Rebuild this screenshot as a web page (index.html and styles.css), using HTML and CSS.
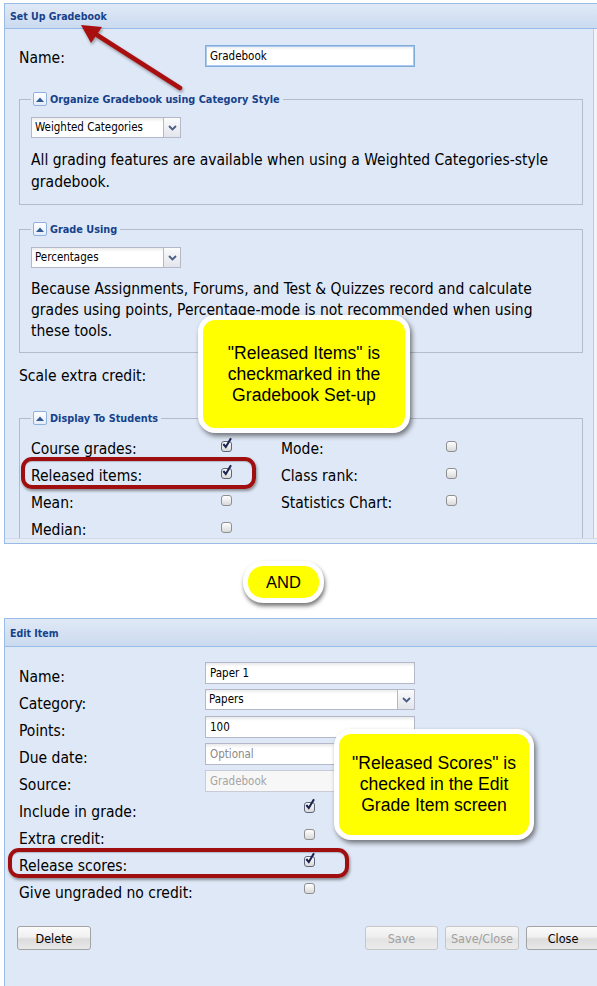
FILE: index.html
```html
<!DOCTYPE html>
<html>
<head>
<meta charset="utf-8">
<title>Gradebook</title>
<link rel="stylesheet" href="styles.css">
</head>
<body>
<div class="page">

  <section class="panel panel-top">
    <header class="panel-head">Set Up Gradebook</header>
    <div class="panel-body">
      <div class="panel-main">
        <div class="row">
          <span class="lbl">Name:</span>
          <div class="input focus">Gradebook</div>
        </div>

        <fieldset class="fs fs1">
          <legend><span class="tog"><svg width="8" height="5" viewBox="0 0 8 5"><path d="M0 5 L4 0.5 L8 5Z" fill="#2d5a96"/></svg></span>Organize Gradebook using Category Style</legend>
          <div class="select sel-small"><span class="val">Weighted Categories</span><span class="arrow"><svg width="9" height="6" viewBox="0 0 9 6"><path d="M1 1 L4.5 4.5 L8 1" fill="none" stroke="#4b5d86" stroke-width="1.8"/></svg></span></div>
          <p class="desc d22">All grading features are available when using a Weighted Categories-style<br>gradebook.</p>
        </fieldset>

        <fieldset class="fs fs2">
          <legend><span class="tog"><svg width="8" height="5" viewBox="0 0 8 5"><path d="M0 5 L4 0.5 L8 5Z" fill="#2d5a96"/></svg></span>Grade Using</legend>
          <div class="select sel-small"><span class="val">Percentages</span><span class="arrow"><svg width="9" height="6" viewBox="0 0 9 6"><path d="M1 1 L4.5 4.5 L8 1" fill="none" stroke="#4b5d86" stroke-width="1.8"/></svg></span></div>
          <p class="desc d21">Because Assignments, Forums, and Test &amp; Quizzes record and calculate<br>grades using points, Percentage-mode is not recommended when using<br>these tools.</p>
        </fieldset>

        <div class="row row-scale">
          <span class="lbl">Scale extra credit:</span>
        </div>

        <fieldset class="fs fs3">
          <legend><span class="tog"><svg width="8" height="5" viewBox="0 0 8 5"><path d="M0 5 L4 0.5 L8 5Z" fill="#2d5a96"/></svg></span>Display To Students</legend>
          <div class="opts">
            <span class="lbl2">Course grades:</span>
            <span class="cbcell"><span class="cb on"><svg width="12" height="13" viewBox="0 0 12 13"><path d="M2.3 7 L4.8 10 L10 1.2" fill="none" stroke="#1c2452" stroke-width="2.1"/></svg></span></span>
            <span class="lbl2">Mode:</span>
            <span class="cbcell"><span class="cb"></span></span>

            <span class="lbl2">Released items:</span>
            <span class="cbcell"><span class="cb on"><svg width="12" height="13" viewBox="0 0 12 13"><path d="M2.3 7 L4.8 10 L10 1.2" fill="none" stroke="#1c2452" stroke-width="2.1"/></svg></span></span>
            <span class="lbl2">Class rank:</span>
            <span class="cbcell"><span class="cb"></span></span>

            <span class="lbl2">Mean:</span>
            <span class="cbcell"><span class="cb"></span></span>
            <span class="lbl2">Statistics Chart:</span>
            <span class="cbcell"><span class="cb"></span></span>

            <span class="lbl2">Median:</span>
            <span class="cbcell"><span class="cb"></span></span>
            <span></span>
            <span></span>
          </div>
        </fieldset>
      </div>
      <div class="scrollbar"></div>
    </div>
    <div class="panel-foot"></div>
  </section>

  <div class="and-wrap"><div class="pill">AND</div></div>

  <section class="panel panel-bottom">
    <header class="panel-head head-b">Edit Item</header>
    <div class="panel-body-b">
      <div class="row">
        <span class="lbl">Name:</span>
        <div class="input">Paper 1</div>
      </div>
      <div class="row">
        <span class="lbl">Category:</span>
        <div class="select sel-wide"><span class="val">Papers</span><span class="arrow"><svg width="9" height="6" viewBox="0 0 9 6"><path d="M1 1 L4.5 4.5 L8 1" fill="none" stroke="#4b5d86" stroke-width="1.8"/></svg></span></div>
      </div>
      <div class="row">
        <span class="lbl">Points:</span>
        <div class="input">100</div>
      </div>
      <div class="row">
        <span class="lbl">Due date:</span>
        <div class="input placeholder">Optional</div>
      </div>
      <div class="row">
        <span class="lbl">Source:</span>
        <div class="input disabled">Gradebook</div>
      </div>
      <div class="row">
        <span class="lbl lbl-cb">Include in grade:</span>
        <span class="cbcell"><span class="cb on"><svg width="12" height="13" viewBox="0 0 12 13"><path d="M2.3 7 L4.8 10 L10 1.2" fill="none" stroke="#1c2452" stroke-width="2.1"/></svg></span></span>
      </div>
      <div class="row">
        <span class="lbl lbl-cb">Extra credit:</span>
        <span class="cbcell"><span class="cb"></span></span>
      </div>
      <div class="row">
        <span class="lbl lbl-cb">Release scores:</span>
        <span class="cbcell"><span class="cb on"><svg width="12" height="13" viewBox="0 0 12 13"><path d="M2.3 7 L4.8 10 L10 1.2" fill="none" stroke="#1c2452" stroke-width="2.1"/></svg></span></span>
      </div>
      <div class="row">
        <span class="lbl lbl-cb">Give ungraded no credit:</span>
        <span class="cbcell"><span class="cb"></span></span>
      </div>

      <div class="btns">
        <button class="btn">Delete</button>
        <button class="btn btn-save" disabled>Save</button>
        <button class="btn" disabled>Save/Close</button>
        <button class="btn">Close</button>
      </div>
    </div>
  </section>

  <!-- annotations -->
  <svg class="arrow-ann" width="200" height="100" viewBox="0 0 200 100">
    <path d="M180 88 L97 35" stroke="#a90f0f" stroke-width="4.5" stroke-linecap="round" fill="none"/>
    <path d="M81 25 L102 27 L91 43 Z" fill="#a90f0f"/>
  </svg>

  <div class="ring ring1"></div>
  <div class="ring ring2"></div>

  <div class="callout callout1">"Released Items" is<br>checkmarked in the<br>Gradebook Set-up</div>
  <div class="callout callout2">"Released Scores" is<br>checked in the Edit<br>Grade Item screen</div>

</div>
</body>
</html>
```

FILE: styles.css
```css
* { box-sizing: border-box; }

html, body {
  margin: 0;
  padding: 0;
  background: #fff;
}

body {
  font-family: "DejaVu Sans Condensed", "DejaVu Sans", sans-serif;
  color: #000;
}

.page {
  position: relative;
  width: 597px;
  height: 986px;
  overflow: hidden;
}

/* ---------- panels ---------- */
.panel {
  margin-left: 4px;
  width: 610px;
  border: 1px solid #99bbe8;
  background: #dfe8f6;
}

.panel-top {
  margin-top: 3px;
  height: 541px;
  overflow: hidden;
  display: flex;
  flex-direction: column;
}

.panel-head {
  height: 25px;
  flex: none;
  border-bottom: 1px solid #99bbe8;
  background: linear-gradient(#e0e9f6, #cbdaef);
  color: #15428b;
  font-weight: bold;
  font-size: 10.5px;
  line-height: 24px;
  padding-left: 5px;
}

.head-b {
  height: 28px;
  line-height: 28px;
}

.panel-body {
  flex: 1;
  display: flex;
  min-height: 0;
  overflow: hidden;
}

.panel-main {
  width: 588px;
  flex: none;
  padding: 16px 0 0 14px;
}

.scrollbar {
  flex: 1;
  border-left: 1px solid #c3cad6;
  background: #f2f4f7;
}

.panel-foot {
  height: 5px;
  flex: none;
  border-top: 1px solid #d3dcea;
  background: #e7edf7;
}

.panel-bottom {
  height: 420px;
}

.panel-body-b {
  padding: 15px 0 0 14px;
}

.panel-body-b .lbl {
  padding-top: 2px;
}

/* ---------- rows ---------- */
.row {
  display: flex;
  align-items: flex-start;
  height: 27px;
}

.lbl {
  width: 186px;
  flex: none;
  font-size: 15.5px;
  line-height: 27px;
  white-space: nowrap;
}

.lbl-cb {
  width: 285px;
}

.row-scale {
  margin-top: 10px;
}

/* ---------- inputs ---------- */
.input {
  width: 210px;
  height: 22px;
  border: 1px solid #b5b8c8;
  background: #fff linear-gradient(#e9e9e9, #fff 4px);
  font-size: 11.5px;
  line-height: 20px;
  padding-left: 4px;
}

.input.focus {
  border-color: #7eadd9;
  box-shadow: inset 0 0 0 1px #a9c8ee;
}

.input.placeholder {
  color: #8a8a8a;
}

.input.disabled {
  color: #a4a4a4;
  border-color: #c9ccd6;
  background: #f7f7f7;
}

.select {
  display: flex;
  height: 21px;
  border: 1px solid #b5b8c8;
  background: #fff;
}

.sel-small { width: 150px; }
.sel-wide { width: 210px; }

.select .val {
  flex: 1;
  padding-left: 3px;
  font-size: 11.5px;
  line-height: 19px;
  background: linear-gradient(#ececec, #fff 4px);
}

.select .arrow {
  width: 17px;
  flex: none;
  border-left: 1px solid #b5b8c8;
  background: linear-gradient(#fbfbfb, #e2e5eb);
  display: flex;
  align-items: center;
  justify-content: center;
}

/* ---------- fieldsets ---------- */
.fs {
  width: 564px;
  margin: 0;
  padding: 11px 11px 11px;
  border: 1px solid #b3bccb;
}

.fs1 { margin-top: 20px; }
.fs2 { margin-top: 17px; padding-bottom: 10px; }
.fs3 { margin-top: 21px; }

.fs legend {
  display: flex;
  align-items: center;
  gap: 3px;
  height: 14px;
  padding: 0 3px 0 2px;
  color: #15428b;
  font-weight: bold;
  font-size: 10.8px;
}

.tog {
  width: 14px;
  height: 14px;
  border: 1px solid #8fb1dd;
  border-radius: 2px;
  background: linear-gradient(#ffffff, #e4ecf8);
  display: flex;
  align-items: center;
  justify-content: center;
}

.desc {
  margin: 11px 0 0;
  font-size: 15.5px;
  white-space: nowrap;
}

.d22 { line-height: 22px; }
.d21 { line-height: 21px; }

.opts {
  display: grid;
  grid-template-columns: 190px 60px 165px 20px;
  grid-auto-rows: 27px;
}

.lbl2 {
  font-size: 15.5px;
  line-height: 27px;
  white-space: nowrap;
}

/* ---------- checkboxes ---------- */
.cbcell {
  display: block;
  padding-top: 5px;
  line-height: 0;
}

.cb {
  display: inline-block;
  position: relative;
  width: 11px;
  height: 11px;
  border: 1px solid #8f8f8f;
  border-radius: 3px;
  background: linear-gradient(#ffffff, #d9d9d9);
}

.cb.on {
  border-color: #5e6577;
}

.cb svg {
  position: absolute;
  left: -1px;
  top: -5px;
}

/* ---------- buttons ---------- */
.btns {
  display: flex;
  gap: 7px;
  margin: 21px 0 0 -2px;
}

.btn {
  width: 74px;
  height: 24px;
  padding: 0;
  border: 1px solid #a3a3a3;
  border-radius: 3px;
  background: linear-gradient(#fbfbfb 0%, #f0f0f0 45%, #dcdcdc 55%, #e8e8e8 100%);
  font-family: "DejaVu Sans Condensed", "DejaVu Sans", sans-serif;
  font-size: 12.5px;
  color: #000;
}

.btn:disabled {
  color: #a0a0a0;
  border-color: #c6c6c6;
  background: linear-gradient(#f7f7f7 0%, #eeeeee 45%, #e3e3e3 55%, #ebebeb 100%);
}

.btn-save {
  margin-left: 267px;
  width: 73px;
}

/* ---------- AND pill ---------- */
.and-wrap {
  padding: 17px 0 15px 243px;
}

.pill {
  width: 81px;
  height: 42px;
  border: 5px solid #fff;
  border-radius: 20px;
  background: #ffff00;
  box-shadow: 1px 3px 4px rgba(0, 0, 0, 0.55);
  font-family: "Liberation Sans", Arial, sans-serif;
  font-size: 16.5px;
  line-height: 32px;
  text-align: center;
}

/* ---------- annotations ---------- */
.arrow-ann {
  position: absolute;
  left: 0;
  top: 0;
  filter: drop-shadow(1px 2px 1.5px rgba(0, 0, 0, 0.35));
}

.ring {
  position: absolute;
  border: 4px solid #a00f0f;
  border-radius: 11px;
  box-shadow: 1px 2px 3px rgba(0, 0, 0, 0.4), inset 0 1px 1px rgba(0, 0, 0, 0.2);
}

.ring1 {
  left: 21px;
  top: 457px;
  width: 235px;
  height: 32px;
}

.ring2 {
  left: 8px;
  top: 848px;
  width: 341px;
  height: 30px;
}

.callout {
  position: absolute;
  display: flex;
  align-items: center;
  justify-content: center;
  text-align: center;
  border: 5px solid #fff;
  border-radius: 17px;
  background: #ffff00;
  box-shadow: 2px 3px 5px rgba(0, 0, 0, 0.5);
  font-family: "Liberation Sans", Arial, sans-serif;
  font-size: 17.6px;
  line-height: 21px;
}

.callout1 {
  left: 198px;
  top: 315px;
  width: 212px;
  height: 118px;
}

.callout2 {
  left: 334px;
  top: 729px;
  width: 200px;
  height: 111px;
}
```
